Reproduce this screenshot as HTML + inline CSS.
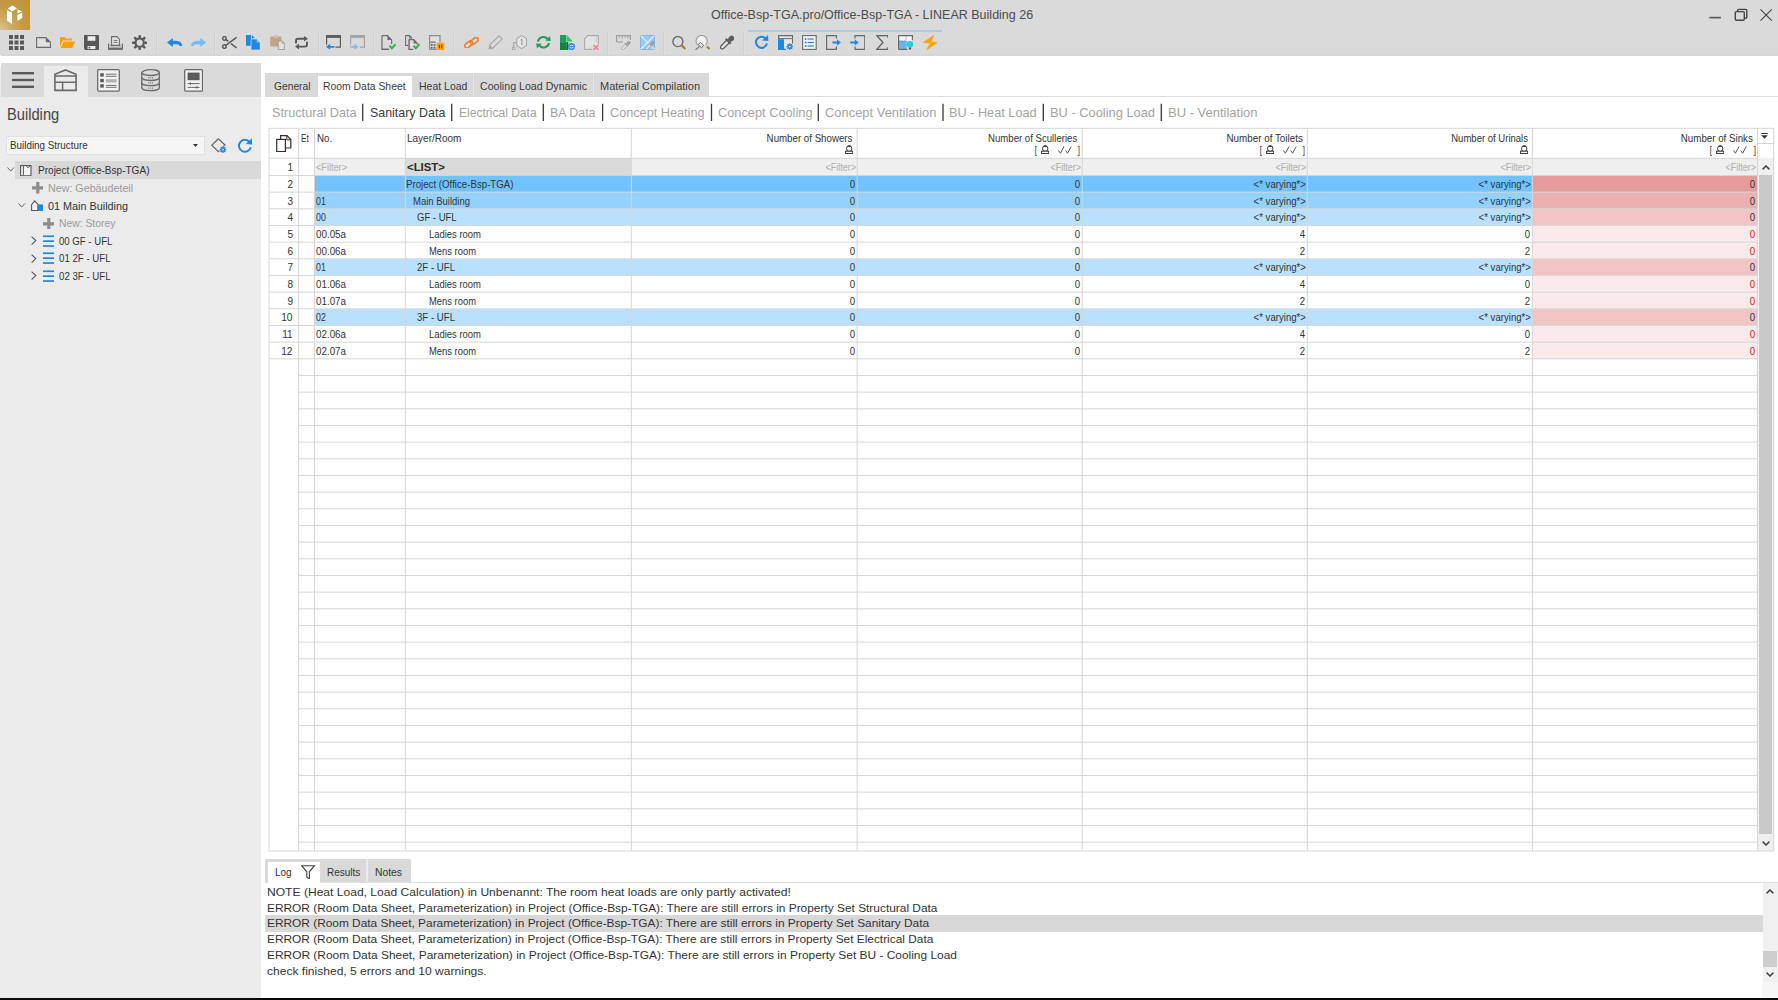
<!DOCTYPE html><html><head><meta charset="utf-8"><title>LINEAR Building</title><style>html,body{margin:0;padding:0}
body{width:1778px;height:1000px;position:relative;overflow:hidden;background:#fff;font-family:"Liberation Sans",sans-serif}
body>div,body>svg,body>span{position:absolute}
.t{white-space:pre;line-height:16px;height:16px}
</style></head><body><div style="left:0.00px;top:0.00px;width:1778.00px;height:55.60px;background:#dadada;"></div><div style="left:0.00px;top:54.00px;width:1778.00px;height:1.60px;background:#d6d6d6;"></div><div style="left:0.00px;top:0.00px;width:30.40px;height:30.20px;background:#dcdce2;"></div><div style="left:0.00px;top:0.00px;width:29.80px;height:29.70px;background:radial-gradient(circle at 0% 100%,#dcc492 0%,#cfae6c 25%,#c49a48 55%,#c09336 100%);"></div><svg style="left:0.00px;top:0.00px" width="30" height="30" viewBox="0 0 30 30" preserveAspectRatio="none"><path d="M12.5,5.4 L16.9,8.4 L12.3,11.3 L7.6,8.5 Z M7.1,10.1 L12,12.4 V23.9 L7.1,20.8 Z M17.4,9.2 L22.2,11.6 L17.4,13.4 Z M22.2,12.7 V17.9 L17.4,20.9 V14.8 Z" fill="#fff"/></svg><span class="t" style="font-size:12.6px;color:#4c4c4c;top:7.20px;left:710.80px;transform:scaleX(0.9935);transform-origin:0 50%;">Office-Bsp-TGA.pro/Office-Bsp-TGA - LINEAR Building 26</span><svg style="left:1705.00px;top:5.00px" width="70" height="20" viewBox="0 0 70 20" preserveAspectRatio="none"><path d="M4.3,12.6 H15.9" stroke="#555" stroke-width="1.6"/><rect x="30.3" y="6.6" width="9" height="8.6" rx="1.2" fill="#dadada" stroke="#444" stroke-width="1.4"/><path d="M32.6,6.4 V5.6 Q32.6,4.4 33.8,4.4 H40.6 Q41.8,4.4 41.8,5.6 V12 Q41.8,13.2 40.6,13.2 H39.6" fill="none" stroke="#444" stroke-width="1.4"/><path d="M55.5,4.4 L66.8,15.6 M66.8,4.4 L55.5,15.6" stroke="#444" stroke-width="1.1"/></svg><svg style="left:9.00px;top:35.20px" width="15" height="15" viewBox="0 0 16 16" preserveAspectRatio="none"><g fill="#585858"><rect x="0" y="0" width="4.2" height="4.2"/><rect x="5.9" y="0" width="4.2" height="4.2"/><rect x="11.8" y="0" width="4.2" height="4.2"/><rect x="0" y="5.9" width="4.2" height="4.2"/><rect x="5.9" y="5.9" width="4.2" height="4.2"/><rect x="11.8" y="5.9" width="4.2" height="4.2"/><rect x="0" y="11.8" width="4.2" height="4.2"/><rect x="5.9" y="11.8" width="4.2" height="4.2"/><rect x="11.8" y="11.8" width="4.2" height="4.2"/></g></svg><svg style="left:36.00px;top:37.00px" width="15" height="11" viewBox="0 0 15 11" preserveAspectRatio="none"><path d="M0.6,0.6 H9.8 L14.4,5.2 V10.4 H0.6 Z" fill="#e0e0e0" stroke="#6a6a6a" stroke-width="1.1"/><path d="M9.8,0.6 V5.2 H14.4 Z" fill="#6a6a6a"/></svg><svg style="left:60.00px;top:37.00px" width="15" height="11" viewBox="0 0 15 11" preserveAspectRatio="none"><path d="M0,0.6 Q0,0 0.6,0 H4.6 L6.2,1.6 H11.6 Q12.2,1.6 12.2,2.2 V3.6 H3.4 Q2.8,3.6 2.5,4.2 L0,9.6 Z" fill="#ffa000"/><path d="M3.6,4.6 H14.6 Q15.2,4.6 14.9,5.2 L12.4,10.6 Q12.2,11 11.7,11 H0.6 Z" fill="#ffa000"/></svg><svg style="left:84.20px;top:35.20px" width="15" height="15" viewBox="0 0 15 15" preserveAspectRatio="none"><path d="M0,0.8 Q0,0 0.8,0 H14.2 Q15,0 15,0.8 V14.2 Q15,15 14.2,15 H1.2 L0,13.8 Z" fill="#585858"/><rect x="3.6" y="1.2" width="7.8" height="4.6" fill="#ececec"/><rect x="3.6" y="11" width="7.8" height="3" fill="#ececec"/><rect x="4.6" y="11.8" width="1.6" height="1.6" fill="#585858"/></svg><svg style="left:108.00px;top:36.00px" width="15" height="14" viewBox="0 0 15 14" preserveAspectRatio="none"><path d="M0.6,7.4 V13.2 H14.4 V7.4" fill="none" stroke="#6a6a6a" stroke-width="1.2"/><rect x="0.6" y="11.6" width="13.8" height="2" fill="#6a6a6a"/><path d="M3.6,9.4 V0.6 H8.8 L11.4,3.2 V9.4 Z" fill="#e6e6e6" stroke="#6a6a6a" stroke-width="1.1"/><path d="M5.8,4.4 H9.4 M5.8,6.4 H9.4" stroke="#6a6a6a" stroke-width="1"/><path d="M2.4,9.6 H12.6" stroke="#6a6a6a" stroke-width="1.2"/></svg><svg style="left:132.10px;top:34.80px" width="15.4" height="15.4" viewBox="0 0 16 16" preserveAspectRatio="none"><g fill="#585858"><path d="M7,0 H9 L9.5,3.2 H6.5 Z" transform="rotate(0 8 8)"/><path d="M7,0 H9 L9.5,3.2 H6.5 Z" transform="rotate(45 8 8)"/><path d="M7,0 H9 L9.5,3.2 H6.5 Z" transform="rotate(90 8 8)"/><path d="M7,0 H9 L9.5,3.2 H6.5 Z" transform="rotate(135 8 8)"/><path d="M7,0 H9 L9.5,3.2 H6.5 Z" transform="rotate(180 8 8)"/><path d="M7,0 H9 L9.5,3.2 H6.5 Z" transform="rotate(225 8 8)"/><path d="M7,0 H9 L9.5,3.2 H6.5 Z" transform="rotate(270 8 8)"/><path d="M7,0 H9 L9.5,3.2 H6.5 Z" transform="rotate(315 8 8)"/></g><circle cx="8" cy="8" r="4.25" fill="none" stroke="#585858" stroke-width="2.1"/></svg><svg style="left:166.70px;top:37.70px" width="15.2" height="9" viewBox="0 0 16 9" preserveAspectRatio="none"><path d="M0,4.4 L6.2,0 V2.7 C12.6,2.5 15.9,4 15.9,7.9 H13.1 C12.9,6.3 10.6,6.1 6.2,6.3 V8.9 Z" fill="#1e88e5"/></svg><svg style="left:190.60px;top:37.70px" width="15.2" height="9" viewBox="0 0 16 9" preserveAspectRatio="none"><g transform="translate(16,0) scale(-1,1)"><path d="M0,4.4 L6.2,0 V2.7 C12.6,2.5 15.9,4 15.9,7.9 H13.1 C12.9,6.3 10.6,6.1 6.2,6.3 V8.9 Z" fill="#7bbaec"/></g></svg><svg style="left:222.00px;top:36.00px" width="15" height="13" viewBox="0 0 15 13" preserveAspectRatio="none"><g fill="none" stroke="#585858" stroke-width="1.4"><circle cx="2.4" cy="2.4" r="1.8"/><circle cx="2.4" cy="10.6" r="1.8"/><path d="M3.8,9.4 L14.6,1.4" stroke-width="1.5"/><path d="M3.8,3.6 L6.4,5.4 M9,7.6 L14.6,11.8" stroke-width="1.5"/></g></svg><svg style="left:246.00px;top:35.00px" width="14.2" height="15" viewBox="0 0 14 15" preserveAspectRatio="none"><path d="M0,0 H5 V10.8 H0 Z" fill="#1e88e5"/><path d="M5.8,0 L8.8,3.2 H5.8 Z" fill="#1e88e5"/><path d="M5,4 H10.4 L14,7.6 V15 H5 Z" fill="#1e88e5" stroke="#dadada" stroke-width="0.7"/><path d="M10.4,4.6 V7.6 H13.4" fill="#8fc4f2"/></svg><svg style="left:270.20px;top:35.00px" width="15" height="15" viewBox="0 0 15 15" preserveAspectRatio="none"><path d="M0.2,1.4 H3.4 V0.8 H5 L5.8,0 L6.6,0.8 H8.2 V1.4 H11.4 V11.6 H0.2 Z" fill="#c2a585"/><rect x="3.4" y="1.2" width="4.8" height="1.6" fill="#d9c4ab"/><path d="M8.2,6 H12.2 L14.6,8.4 V14.6 H8.2 Z" fill="#e2e2e2" stroke="#9a9a9a" stroke-width="0.9"/><path d="M12.2,6 V8.4 H14.6" fill="none" stroke="#9a9a9a" stroke-width="0.8"/></svg><svg style="left:295.40px;top:35.60px" width="13" height="13.2" viewBox="0 0 13 13.2" preserveAspectRatio="none"><g fill="none" stroke="#585858" stroke-width="1.9"><path d="M1,7.4 V4.8 Q1,2.8 3,2.8 H10"/><path d="M12,5.8 V8.6 Q12,10.6 10,10.6 H3"/></g><path d="M9,0 L13,2.8 L9,5.6 Z" fill="#585858"/><path d="M4,7.8 L0,10.6 L4,13.4 Z" fill="#585858"/></svg><svg style="left:326.00px;top:35.20px" width="15" height="14.6" viewBox="0 0 15 15" preserveAspectRatio="none"><rect x="0" y="0" width="15" height="3" fill="#5e5e5e"/><path d="M0.6,2 V10" stroke="#5e5e5e" stroke-width="1.2"/><path d="M14.4,2 V12.4 H9.4" fill="none" stroke="#5e5e5e" stroke-width="1.2"/><path d="M0,12.2 L4.2,9 V11.2 H8.4 V13.2 H4.2 V15.2 Z" fill="#1e88e5"/></svg><svg style="left:350.00px;top:35.20px" width="15" height="14.6" viewBox="0 0 15 15" preserveAspectRatio="none"><rect x="0" y="0" width="15" height="3" fill="#a4a4a4"/><path d="M0.6,2 V10" stroke="#a4a4a4" stroke-width="1.2"/><path d="M14.4,2 V12.4 H9.8" fill="none" stroke="#a4a4a4" stroke-width="1.2"/><path d="M8.6,12.2 L4.4,9 V11.2 H0.2 V13.2 H4.4 V15.2 Z" fill="#7bbaec"/></svg><svg style="left:381.00px;top:35.00px" width="15.2" height="15" viewBox="0 0 16 15" preserveAspectRatio="none"><path d="M1,0.6 H6.8 L11.2,5 V9 M8,14.4 H1 Z" fill="#dfdfdf" stroke="#6a6a6a" stroke-width="1.2"/><path d="M1,0.6 V14.4 H8.6" fill="none" stroke="#6a6a6a" stroke-width="1.2"/><path d="M6.8,0.6 V5 H11.2 Z" fill="#6a6a6a"/><path d="M8.2,11.6 L9.8,10 L11.4,11.8 L14.6,8.4 L16,10 L11.4,14.8 Z" fill="#2db84d"/></svg><svg style="left:405.20px;top:35.00px" width="15.2" height="15" viewBox="0 0 16 15" preserveAspectRatio="none"><path d="M0.6,0.6 H4.8 L7.4,3.2 M0.6,0.6 V10.4 H3.2" fill="none" stroke="#6a6a6a" stroke-width="1.1"/><path d="M4.8,0.8 V3.2 H7.2" fill="none" stroke="#6a6a6a" stroke-width="0.9"/><path d="M4.4,4.6 H9 L12.8,8.4 V9.6 M4.4,4.6 V14.4 H8.6" fill="none" stroke="#6a6a6a" stroke-width="1.2"/><path d="M4.4,4.6 H9 L12.8,8.4 V14.4 H4.4 Z" fill="#dfdfdf"/><path d="M4.4,4.6 H9 L12.8,8.4 V9.6 M4.4,4.6 V14.4 H8.6" fill="none" stroke="#6a6a6a" stroke-width="1.2"/><path d="M9,4.6 V8.4 H12.8 Z" fill="#6a6a6a"/><path d="M8.2,11.6 L9.8,10 L11.4,11.8 L14.6,8.4 L16,10 L11.4,14.8 Z" fill="#2db84d"/></svg><svg style="left:429.30px;top:35.00px" width="15.3" height="15" viewBox="0 0 15.3 15" preserveAspectRatio="none"><path d="M0.6,14.4 V0.6 H11 V7.4" fill="#e0e0e0" stroke="#8a8a8a" stroke-width="1.2"/><path d="M0.6,14.4 H7.6" stroke="#8a8a8a" stroke-width="1.2"/><rect x="1.2" y="6.4" width="5.6" height="1.6" fill="#8a8a8a"/><g fill="#666"><rect x="1.8" y="9" width="1.8" height="1.8"/><rect x="4.6" y="9" width="1.8" height="1.8"/><rect x="1.8" y="11.8" width="1.8" height="1.8"/><rect x="4.6" y="11.8" width="1.8" height="1.8"/></g><rect x="7.8" y="7.8" width="7.5" height="7.2" rx="0.5" fill="#ffa000"/><rect x="9.8" y="9.6" width="1.1" height="3.6" fill="#6b4a10"/><rect x="12.2" y="9.6" width="1.1" height="3.6" fill="#6b4a10"/></svg><svg style="left:464.00px;top:36.60px" width="15" height="11.5" viewBox="0 0 15 11.5" preserveAspectRatio="none"><g fill="none" stroke="#f57c1f" stroke-width="1.55"><rect x="-4.4" y="-2.2" width="8.8" height="4.4" rx="2.2" transform="translate(4.7,7.5) rotate(-38)"/><rect x="-4.4" y="-2.2" width="8.8" height="4.4" rx="2.2" transform="translate(10.3,4) rotate(-38)"/></g></svg><svg style="left:487.80px;top:35.00px" width="15" height="15" viewBox="0 0 15 15" preserveAspectRatio="none"><path d="M11,0.8 L14.2,4 L4.4,13.4 L1.4,10.4 Z" fill="#dcdcdc" stroke="#a8a8a8" stroke-width="1.2"/><path d="M1.4,10.4 L0.4,14.6 L4.4,13.4 Z" fill="#a8a8a8"/></svg><svg style="left:512.00px;top:35.00px" width="15" height="15" viewBox="0 0 15 15" preserveAspectRatio="none"><path d="M9.6,0.6 L14.4,3.6 V10.4 L9.6,13.6 L4.8,10.4 V3.6 Z" fill="#e6e6e6" stroke="#a8a8a8" stroke-width="1.1"/><path d="M8.7,5 L9.9,4.2 V10.2" fill="none" stroke="#8a8a8a" stroke-width="1"/><path d="M1.7,12.4 V7.6 H4.8" fill="none" stroke="#a8a8a8" stroke-width="1.1"/><rect x="0.5" y="12.2" width="2.4" height="2.4" fill="#e6e6e6" stroke="#a8a8a8" stroke-width="1"/></svg><svg style="left:536.00px;top:36.00px" width="15" height="12.5" viewBox="0 0 15 12.5" preserveAspectRatio="none"><g fill="none" stroke="#2c9a58" stroke-width="2.1"><path d="M2,5.6 A5.4,5.2 0 0 1 11.6,3"/><path d="M13,6.9 A5.4,5.2 0 0 1 3.4,9.5"/></g><path d="M9.4,4.8 L14.8,5 L14,0 Z" fill="#2c9a58"/><path d="M5.6,7.7 L0.2,7.5 L1,12.5 Z" fill="#2c9a58"/></svg><svg style="left:560.00px;top:35.00px" width="15" height="15" viewBox="0 0 15 15" preserveAspectRatio="none"><rect x="0" y="0" width="6.3" height="7.2" fill="#1f9e58"/><rect x="0" y="7.2" width="6.3" height="7.8" fill="#138245"/><rect x="6.3" y="7" width="1.9" height="8" fill="#0d6a37"/><path d="M6.9,0 L12.2,5.8 V6.4 H6.9 Z" fill="#35c27c"/><circle cx="11.5" cy="11.6" r="3.5" fill="#2a8be8"/><path d="M9.5,11.2 Q11.5,9.2 13.4,10.9 M13.5,12.1 Q11.5,14.1 9.6,12.4" stroke="#d6ebff" stroke-width="1" fill="none"/></svg><svg style="left:584.00px;top:35.00px" width="15" height="15" viewBox="0 0 15 15" preserveAspectRatio="none"><path d="M0.6,14.4 V3.8 L3.8,0.6 H14.4 V9" fill="#e4e4e4" stroke="#aaa" stroke-width="1.1"/><path d="M0.6,14.4 H8.4" stroke="#aaa" stroke-width="1.1"/><path d="M12.2,1 V8" stroke="#d0d0d0" stroke-width="1.4"/><path d="M9.6,10 L14.4,14.8 M14.4,10 L9.6,14.8" stroke="#ee7f8c" stroke-width="1.5"/></svg><svg style="left:616.00px;top:35.00px" width="15" height="15" viewBox="0 0 15 15" preserveAspectRatio="none"><path d="M0.6,7 V0.6 H14.4 V5" fill="none" stroke="#a2a2a2" stroke-width="1.2"/><path d="M0.6,7 H7" stroke="#a2a2a2" stroke-width="1.2"/><path d="M3.4,0.6 V2.6 M6.2,0.6 V3.4 M9,0.6 V2.6 M11.8,0.6 V3.4" stroke="#a2a2a2" stroke-width="1"/><g transform="translate(5.2,5.6) scale(0.66)"><path d="M6.6,5 L9.4,7.8 L3.5,13.5 Q2.1,14.5 1,13.5 Q0,12.3 1,11 Z" fill="#e4e4e4" stroke="#9c9c9c" stroke-width="1.2"/><path d="M5.1,4.5 L6.5,3.1 L11.4,8 L10,9.4 Z" fill="#9c9c9c"/><path d="M7.6,4.2 L9.2,2.2 Q10.8,-0.4 13.2,1.2 Q15.4,3.2 13.2,5.6 L10.4,7 Z" fill="#9c9c9c"/></g></svg><svg style="left:640.00px;top:35.00px" width="15" height="15" viewBox="0 0 15 15" preserveAspectRatio="none"><rect x="0" y="0" width="15" height="15" fill="#9cc9ee"/><rect x="0.4" y="0.4" width="14.2" height="14.2" fill="none" stroke="#7ab5e6" stroke-width="0.8"/><path d="M0.6,0.6 L14.4,14.4 M14.4,0.6 L0.6,14.4" stroke="#eaf4fc" stroke-width="1.1"/><g transform="translate(5.2,5.6) scale(0.66)"><path d="M6.6,5 L9.4,7.8 L3.5,13.5 Q2.1,14.5 1,13.5 Q0,12.3 1,11 Z" fill="#e4e4e4" stroke="#9c9c9c" stroke-width="1.2"/><path d="M5.1,4.5 L6.5,3.1 L11.4,8 L10,9.4 Z" fill="#9c9c9c"/><path d="M7.6,4.2 L9.2,2.2 Q10.8,-0.4 13.2,1.2 Q15.4,3.2 13.2,5.6 L10.4,7 Z" fill="#9c9c9c"/></g></svg><svg style="left:672.00px;top:36.00px" width="14" height="13.6" viewBox="0 0 14 13.6" preserveAspectRatio="none"><circle cx="5.9" cy="5.6" r="5" fill="#dcdcdc" stroke="#686868" stroke-width="1.35"/><path d="M9.9,9.5 L13.3,13" stroke="#b3781f" stroke-width="2.2"/></svg><svg style="left:695.00px;top:35.00px" width="15.3" height="15" viewBox="0 0 15.3 15" preserveAspectRatio="none"><path d="M3.4,10.6 A5.6,5.6 0 1 1 10.6,10" fill="#f3f3f3" stroke="#9a9a9a" stroke-width="1.1"/><path d="M11.9,11.4 L14.6,14" stroke="#b3781f" stroke-width="2.1"/><path d="M5.4,7.4 L8.6,10.2 L6.6,12.8 L3.2,9.8 Z" fill="#e6e6e6" stroke="#666" stroke-width="1"/><path d="M4.2,11.6 L0.5,14.8" stroke="#666" stroke-width="1.1"/></svg><svg style="left:719.70px;top:35.40px" width="14.5" height="14.5" viewBox="0 0 14.5 14.5" preserveAspectRatio="none"><g transform="translate(0,0) scale(1.0)"><path d="M6.6,5 L9.4,7.8 L3.5,13.5 Q2.1,14.5 1,13.5 Q0,12.3 1,11 Z" fill="#e4e4e4" stroke="#5a5a5a" stroke-width="1.2"/><path d="M5.1,4.5 L6.5,3.1 L11.4,8 L10,9.4 Z" fill="#5a5a5a"/><path d="M7.6,4.2 L9.2,2.2 Q10.8,-0.4 13.2,1.2 Q15.4,3.2 13.2,5.6 L10.4,7 Z" fill="#5a5a5a"/></g></svg><svg style="left:754.40px;top:35.30px" width="14.6" height="14" viewBox="0 0 14.6 14" preserveAspectRatio="none"><path d="M11.8,3.6 A5.6,5.6 0 1 0 13,8.6" fill="none" stroke="#1e88e5" stroke-width="2"/><path d="M8.2,5.6 L14.4,6 L14,0 Z" fill="#1e88e5"/></svg><svg style="left:777.80px;top:35.00px" width="15.3" height="15" viewBox="0 0 15.3 15" preserveAspectRatio="none"><path d="M0.6,14.4 V0.6 H14.6 V8.4" fill="#e6e6e6" stroke="#6a6a6a" stroke-width="1.2"/><path d="M0.6,3.6 H14.6" stroke="#6a6a6a" stroke-width="1"/><rect x="0" y="4.2" width="6" height="10.8" fill="#1e88e5"/><path d="M6,14.4 H8" stroke="#6a6a6a" stroke-width="1.2"/><g transform="translate(11.8,11.6)" fill="#1e88e5"><rect x="-0.7" y="-3.2" width="1.4" height="1.6" transform="rotate(0)"/><rect x="-0.7" y="-3.2" width="1.4" height="1.6" transform="rotate(45)"/><rect x="-0.7" y="-3.2" width="1.4" height="1.6" transform="rotate(90)"/><rect x="-0.7" y="-3.2" width="1.4" height="1.6" transform="rotate(135)"/><rect x="-0.7" y="-3.2" width="1.4" height="1.6" transform="rotate(180)"/><rect x="-0.7" y="-3.2" width="1.4" height="1.6" transform="rotate(225)"/><rect x="-0.7" y="-3.2" width="1.4" height="1.6" transform="rotate(270)"/><rect x="-0.7" y="-3.2" width="1.4" height="1.6" transform="rotate(315)"/><circle r="2.3"/><circle r="0.9" fill="#e6e6e6"/></g></svg><svg style="left:802.00px;top:35.00px" width="14.8" height="15" viewBox="0 0 14.8 15" preserveAspectRatio="none"><rect x="0.6" y="0.6" width="13.6" height="13.8" fill="#f4f4f4" stroke="#6a6a6a" stroke-width="1.1"/><g fill="#1e88e5"><circle cx="3.6" cy="4" r="1"/><circle cx="3.6" cy="7.5" r="1"/><circle cx="3.6" cy="11" r="1"/><rect x="5.6" y="3.4" width="6.2" height="1.2"/><rect x="5.6" y="6.9" width="6.2" height="1.2"/><rect x="5.6" y="10.4" width="6.2" height="1.2"/></g></svg><svg style="left:826.00px;top:35.00px" width="15" height="15" viewBox="0 0 15 15" preserveAspectRatio="none"><path d="M10.4,3.4 V0.6 H0.6 V14.4 H10.4 V11.6" fill="none" stroke="#6a6a6a" stroke-width="1.2"/><path d="M6.4,6.6 H11 V4.4 L15,7.5 L11,10.6 V8.4 H6.4 Z" fill="#1e88e5"/></svg><svg style="left:849.60px;top:35.00px" width="15.4" height="15" viewBox="0 0 15.4 15" preserveAspectRatio="none"><path d="M5,3.4 V0.6 H14.8 V14.4 H5 V11.6" fill="none" stroke="#6a6a6a" stroke-width="1.2"/><path d="M0.2,6.6 H4.8 V4.4 L8.8,7.5 L4.8,10.6 V8.4 H0.2 Z" fill="#1e88e5"/></svg><svg style="left:875.80px;top:35.00px" width="12.4" height="15" viewBox="0 0 12.4 15" preserveAspectRatio="none"><path d="M11.8,2.8 V0.7 H0.9 L7,7.5 L0.9,14.3 H11.8 V12.2" fill="none" stroke="#626262" stroke-width="1.3"/></svg><svg style="left:898.30px;top:35.00px" width="15" height="15" viewBox="0 0 15 15" preserveAspectRatio="none"><rect x="0.6" y="0.6" width="13.8" height="5.6" fill="#f6f6f6"/><rect x="1.2" y="6" width="7.4" height="8.4" fill="#6ab3e9"/><path d="M1,6 H8.6" stroke="#2a8be8" stroke-width="0.9" stroke-dasharray="1.6,0.8"/><path d="M8.1,1.2 V5.6" stroke="#3d9df0" stroke-width="1" stroke-dasharray="1.2,1"/><path d="M0.6,14.4 V0.6 H14.4 V5.2 M0.6,14.4 H9.4" fill="none" stroke="#6a6a6a" stroke-width="1.2"/><circle cx="12" cy="9.3" r="3.3" fill="#19d2e2"/><rect x="10.9" y="12.6" width="2.2" height="1.9" rx="0.5" fill="#555"/></svg><svg style="left:922.50px;top:35.00px" width="14.5" height="15" viewBox="0 0 14.5 15" preserveAspectRatio="none"><path d="M11,0.2 L0.1,7.4 L7,8.3 L3.7,14.9 L14.4,7.6 L8.3,6.8 Z" fill="#ffa400" stroke="#ffa400" stroke-width="0.5" stroke-linejoin="round"/></svg><div style="left:155.80px;top:30.70px;width:1.00px;height:23.00px;background:#d1d1d1;"></div><div style="left:156.80px;top:30.70px;width:1.00px;height:23.00px;background:#dfdfdf;"></div><div style="left:213.90px;top:30.70px;width:1.00px;height:23.00px;background:#d1d1d1;"></div><div style="left:214.90px;top:30.70px;width:1.00px;height:23.00px;background:#dfdfdf;"></div><div style="left:318.00px;top:30.70px;width:1.00px;height:23.00px;background:#d1d1d1;"></div><div style="left:319.00px;top:30.70px;width:1.00px;height:23.00px;background:#dfdfdf;"></div><div style="left:373.00px;top:30.70px;width:1.00px;height:23.00px;background:#d1d1d1;"></div><div style="left:374.00px;top:30.70px;width:1.00px;height:23.00px;background:#dfdfdf;"></div><div style="left:452.90px;top:30.70px;width:1.00px;height:23.00px;background:#d1d1d1;"></div><div style="left:453.90px;top:30.70px;width:1.00px;height:23.00px;background:#dfdfdf;"></div><div style="left:607.20px;top:30.70px;width:1.00px;height:23.00px;background:#d1d1d1;"></div><div style="left:608.20px;top:30.70px;width:1.00px;height:23.00px;background:#dfdfdf;"></div><div style="left:663.00px;top:30.70px;width:1.00px;height:23.00px;background:#d1d1d1;"></div><div style="left:664.00px;top:30.70px;width:1.00px;height:23.00px;background:#dfdfdf;"></div><div style="left:742.60px;top:30.70px;width:1.00px;height:23.00px;background:#d1d1d1;"></div><div style="left:743.60px;top:30.70px;width:1.00px;height:23.00px;background:#dfdfdf;"></div><div style="left:748.00px;top:30.00px;width:194.00px;height:2.00px;background:#a0cee3;"></div><div style="left:0.00px;top:63.00px;width:261.00px;height:934.60px;background:#ebebeb;"></div><div style="left:0.00px;top:55.00px;width:1.20px;height:12.00px;background:#fff;"></div><div style="left:1.00px;top:63.00px;width:260.00px;height:34.00px;background:#dadada;"></div><div style="left:43.50px;top:66.00px;width:44.50px;height:31.20px;background:#ebebeb;"></div><svg style="left:11.80px;top:72.00px" width="22.4" height="16" viewBox="0 0 22.4 16" preserveAspectRatio="none"><g fill="#5a5a5a"><rect y="0" width="22.4" height="2.4"/><rect y="6.8" width="22.4" height="2.4"/><rect y="13.6" width="22.4" height="2.4"/></g></svg><svg style="left:54.30px;top:69.40px" width="23" height="22.4" viewBox="0 0 23 22.4" preserveAspectRatio="none"><path d="M0.9,21.4 V5.3 L11.5,0.9 L22.1,5.3 V21.4 Z" fill="none" stroke="#6a6a6a" stroke-width="1.6"/><path d="M0.9,7 H22.1 M0.9,13.2 H22.1 M8.6,13.2 V21.4" stroke="#6a6a6a" stroke-width="1.5" fill="none"/></svg><svg style="left:97.00px;top:69.00px" width="23" height="22.8" viewBox="0 0 23 22.8" preserveAspectRatio="none"><rect x="0.7" y="0.7" width="21.6" height="21.4" rx="1" fill="#f2f2f2" stroke="#6a6a6a" stroke-width="1.3"/><g fill="#5a5a5a"><rect x="3.2" y="4.2" width="3.6" height="3.4"/><rect x="3.2" y="9.9" width="3.6" height="3.4"/><rect x="3.2" y="15.2" width="3.6" height="3.4"/></g><path d="M8.8,5.2 H19.6 M8.8,7.3 H19.6 M8.8,16.4 H19.6 M8.8,18.3 H19.6" stroke="#5e5e5e" stroke-width="0.9"/><rect x="8.8" y="10.2" width="10.8" height="3.3" fill="#b0b0b0"/></svg><svg style="left:140.90px;top:69.40px" width="19.2" height="22.4" viewBox="0 0 19.2 22.4" preserveAspectRatio="none"><g fill="none" stroke="#6a6a6a" stroke-width="1.3"><ellipse cx="9.6" cy="3.6" rx="8.8" ry="2.9"/><path d="M0.8,3.6 V18.8 A8.8,2.9 0 0 0 18.4,18.8 V3.6"/><path d="M0.8,8.6 A8.8,2.9 0 0 0 18.4,8.6 M0.8,13.7 A8.8,2.9 0 0 0 18.4,13.7"/></g><g fill="#8a8a8a"><rect x="7.4" y="8" width="0.9" height="1.6"/><rect x="9.2" y="8" width="0.9" height="1.6"/><rect x="11" y="8" width="0.9" height="1.6"/><rect x="7.4" y="13.2" width="0.9" height="1.6"/><rect x="9.2" y="13.2" width="0.9" height="1.6"/><rect x="11" y="13.2" width="0.9" height="1.6"/><rect x="7.4" y="18.4" width="0.9" height="1.6"/><rect x="9.2" y="18.4" width="0.9" height="1.6"/><rect x="11" y="18.4" width="0.9" height="1.6"/></g></svg><svg style="left:183.90px;top:69.00px" width="19.2" height="22.8" viewBox="0 0 19.2 22.8" preserveAspectRatio="none"><rect x="0.7" y="0.7" width="17.8" height="21.4" rx="1" fill="#f2f2f2" stroke="#6a6a6a" stroke-width="1.3"/><rect x="3.6" y="3.6" width="12" height="7.6" fill="#5a5a5a"/><path d="M3.6,14.6 H15.6 M3.6,18.4 H15.6" stroke="#5a5a5a" stroke-width="0.9"/><path d="M6.4,13.4 V15.8 M12.8,17.2 V19.6" stroke="#5a5a5a" stroke-width="1.1"/></svg><span class="t" style="font-size:15.6px;color:#444;top:106.80px;left:6.90px;transform:scaleX(0.9408);transform-origin:0 50%;">Building</span><div style="left:6.20px;top:136.30px;width:199.20px;height:19.00px;background:#f5f5f5;box-sizing:border-box;border:1px solid #e0e0e0"></div><span class="t" style="font-size:11.2px;color:#333;top:137.00px;left:9.70px;transform:scaleX(0.8798);transform-origin:0 50%;">Building Structure</span><svg style="left:193.20px;top:143.80px" width="5" height="3" viewBox="0 0 5 3" preserveAspectRatio="none"><path d="M0,0 H5 L2.5,3 Z" fill="#333"/></svg><svg style="left:211.00px;top:138.00px" width="16" height="15.4" viewBox="0 0 16 15.4" preserveAspectRatio="none"><path d="M7.4,0.8 L14,7 L12.4,8.4 M7.4,0.8 L0.8,7.2 L7.4,13.6 L8.6,12.6" fill="none" stroke="#666" stroke-width="1.2"/><g transform="translate(12,11.6)" fill="#1e88e5"><rect x="-0.7" y="-3.3" width="1.4" height="1.7" transform="rotate(0)"/><rect x="-0.7" y="-3.3" width="1.4" height="1.7" transform="rotate(45)"/><rect x="-0.7" y="-3.3" width="1.4" height="1.7" transform="rotate(90)"/><rect x="-0.7" y="-3.3" width="1.4" height="1.7" transform="rotate(135)"/><rect x="-0.7" y="-3.3" width="1.4" height="1.7" transform="rotate(180)"/><rect x="-0.7" y="-3.3" width="1.4" height="1.7" transform="rotate(225)"/><rect x="-0.7" y="-3.3" width="1.4" height="1.7" transform="rotate(270)"/><rect x="-0.7" y="-3.3" width="1.4" height="1.7" transform="rotate(315)"/><circle r="2.4"/><circle r="0.9" fill="#ebebeb"/></g></svg><svg style="left:237.00px;top:138.00px" width="15.4" height="15.2" viewBox="0 0 15.4 15.2" preserveAspectRatio="none"><path d="M12.6,4 A6,6 0 1 0 13.8,9.2" fill="none" stroke="#1e88e5" stroke-width="2"/><path d="M8.8,6 L15.2,6.4 L14.8,0.2 Z" fill="#1e88e5"/></svg><div style="left:15.00px;top:161.20px;width:246.00px;height:17.70px;background:#d9d9d9;"></div><svg style="left:7.30px;top:167.40px" width="7.4" height="4.6" viewBox="0 0 9.2 5.4" preserveAspectRatio="none"><path d="M0.6,0.6 L4.6,4.8 L8.6,0.6" fill="none" stroke="#555" stroke-width="1.1"/></svg><svg style="left:20.20px;top:164.60px" width="11.6" height="11.4" viewBox="0 0 11.6 11.4" preserveAspectRatio="none"><rect x="0.6" y="0.6" width="10.4" height="10.2" fill="#f4f4f4" stroke="#555" stroke-width="1.1"/><path d="M3.4,0.6 V10.8" stroke="#555" stroke-width="1"/><path d="M6.4,0.8 L8.2,3 L10,0.8" fill="none" stroke="#555" stroke-width="0.9"/></svg><span class="t" style="font-size:10.9px;color:#333;top:162.40px;left:37.50px;transform:scaleX(0.9227);transform-origin:0 50%;">Project (Office-Bsp-TGA)</span><svg style="left:31.50px;top:182.40px" width="11.6" height="11.6" viewBox="0 0 11.6 11.6" preserveAspectRatio="none"><path d="M4.2,0 H7.4 V4.2 H11.6 V7.4 H7.4 V11.6 H4.2 V7.4 H0 V4.2 H4.2 Z" fill="#8c8c8c"/></svg><span class="t" style="font-size:10.9px;color:#9a9a9a;top:180.10px;left:48.30px;transform:scaleX(0.9829);transform-origin:0 50%;">New: Gebäudeteil</span><svg style="left:18.30px;top:202.50px" width="7.4" height="4.6" viewBox="0 0 9.2 5.4" preserveAspectRatio="none"><path d="M0.6,0.6 L4.6,4.8 L8.6,0.6" fill="none" stroke="#555" stroke-width="1.1"/></svg><svg style="left:30.90px;top:199.60px" width="12.2" height="11.6" viewBox="0 0 12.2 12" preserveAspectRatio="none"><path d="M0.6,11 V4.8 L3.8,0.9 L7,4.8 V11 Z" fill="#f4f4f4" stroke="#555" stroke-width="1.1"/><rect x="6.5" y="4.6" width="5.5" height="6.8" fill="#1e88e5"/></svg><span class="t" style="font-size:10.9px;color:#333;top:197.60px;left:48.30px;transform:scaleX(0.9934);transform-origin:0 50%;">01 Main Building</span><svg style="left:42.50px;top:217.60px" width="11.6" height="11.6" viewBox="0 0 11.6 11.6" preserveAspectRatio="none"><path d="M4.2,0 H7.4 V4.2 H11.6 V7.4 H7.4 V11.6 H4.2 V7.4 H0 V4.2 H4.2 Z" fill="#8c8c8c"/></svg><span class="t" style="font-size:10.9px;color:#9a9a9a;top:215.30px;left:59.30px;transform:scaleX(0.9506);transform-origin:0 50%;">New: Storey</span><svg style="left:31.20px;top:236.40px" width="5.4" height="9.2" viewBox="0 0 5.4 9.2" preserveAspectRatio="none"><path d="M0.6,0.6 L4.8,4.6 L0.6,8.6" fill="none" stroke="#555" stroke-width="1.1"/></svg><svg style="left:42.60px;top:234.80px" width="11.6" height="12.4" viewBox="0 0 11.6 12.4" preserveAspectRatio="none"><g fill="#1e88e5"><rect y="0.4" width="11.6" height="1.7"/><rect y="5.3" width="11.6" height="1.7"/><rect y="10.2" width="11.6" height="1.7"/></g></svg><span class="t" style="font-size:10.9px;color:#333;top:233.00px;left:59.30px;transform:scaleX(0.8824);transform-origin:0 50%;">00 GF - UFL</span><svg style="left:31.20px;top:253.80px" width="5.4" height="9.2" viewBox="0 0 5.4 9.2" preserveAspectRatio="none"><path d="M0.6,0.6 L4.8,4.6 L0.6,8.6" fill="none" stroke="#555" stroke-width="1.1"/></svg><svg style="left:42.60px;top:252.20px" width="11.6" height="12.4" viewBox="0 0 11.6 12.4" preserveAspectRatio="none"><g fill="#1e88e5"><rect y="0.4" width="11.6" height="1.7"/><rect y="5.3" width="11.6" height="1.7"/><rect y="10.2" width="11.6" height="1.7"/></g></svg><span class="t" style="font-size:10.9px;color:#333;top:250.40px;left:59.30px;transform:scaleX(0.8880);transform-origin:0 50%;">01 2F - UFL</span><svg style="left:31.20px;top:271.20px" width="5.4" height="9.2" viewBox="0 0 5.4 9.2" preserveAspectRatio="none"><path d="M0.6,0.6 L4.8,4.6 L0.6,8.6" fill="none" stroke="#555" stroke-width="1.1"/></svg><svg style="left:42.60px;top:269.60px" width="11.6" height="12.4" viewBox="0 0 11.6 12.4" preserveAspectRatio="none"><g fill="#1e88e5"><rect y="0.4" width="11.6" height="1.7"/><rect y="5.3" width="11.6" height="1.7"/><rect y="10.2" width="11.6" height="1.7"/></g></svg><span class="t" style="font-size:10.9px;color:#333;top:267.80px;left:59.30px;transform:scaleX(0.8880);transform-origin:0 50%;">02 3F - UFL</span><div style="left:0.00px;top:997.60px;width:1778.00px;height:2.40px;background:#0a0a0a;"></div><div style="left:264.70px;top:96.40px;width:1514.00px;height:1.00px;background:#dedede;"></div><div style="left:264.70px;top:73.20px;width:444.20px;height:23.70px;background:#d9d9d9;"></div><div style="left:317.70px;top:76.10px;width:94.40px;height:21.40px;background:#fff;"></div><div style="left:472.80px;top:73.20px;width:1.00px;height:23.70px;background:#e6e6e6;"></div><div style="left:592.60px;top:73.20px;width:1.00px;height:23.70px;background:#e6e6e6;"></div><span class="t" style="font-size:10.9px;color:#3a3a3a;top:77.90px;left:273.50px;transform:scaleX(0.9419);transform-origin:0 50%;">General</span><span class="t" style="font-size:10.9px;color:#3a3a3a;top:77.90px;left:323.40px;transform:scaleX(0.9541);transform-origin:0 50%;">Room Data Sheet</span><span class="t" style="font-size:10.9px;color:#3a3a3a;top:77.90px;left:418.60px;transform:scaleX(0.9629);transform-origin:0 50%;">Heat Load</span><span class="t" style="font-size:10.9px;color:#3a3a3a;top:77.90px;left:479.80px;transform:scaleX(0.9765);transform-origin:0 50%;">Cooling Load Dynamic</span><span class="t" style="font-size:10.9px;color:#3a3a3a;top:77.90px;left:600.20px;transform:scaleX(1.0074);transform-origin:0 50%;">Material Compilation</span><span class="t" style="font-size:12.9px;color:#a3a3a3;top:104.80px;left:271.60px;transform:scaleX(0.9839);transform-origin:0 50%;">Structural Data</span><span class="t" style="font-size:12.9px;color:#3a3a3a;top:104.80px;left:370.00px;transform:scaleX(0.9640);transform-origin:0 50%;">Sanitary Data</span><span class="t" style="font-size:12.9px;color:#a3a3a3;top:104.80px;left:458.70px;transform:scaleX(0.9337);transform-origin:0 50%;">Electrical Data</span><span class="t" style="font-size:12.9px;color:#a3a3a3;top:104.80px;left:550.30px;transform:scaleX(0.9620);transform-origin:0 50%;">BA Data</span><span class="t" style="font-size:12.9px;color:#a3a3a3;top:104.80px;left:609.50px;transform:scaleX(0.9841);transform-origin:0 50%;">Concept Heating</span><span class="t" style="font-size:12.9px;color:#a3a3a3;top:104.80px;left:717.50px;transform:scaleX(0.9915);transform-origin:0 50%;">Concept Cooling</span><span class="t" style="font-size:12.9px;color:#a3a3a3;top:104.80px;left:825.00px;transform:scaleX(1.0028);transform-origin:0 50%;">Concept Ventilation</span><span class="t" style="font-size:12.9px;color:#a3a3a3;top:104.80px;left:949.40px;transform:scaleX(0.9858);transform-origin:0 50%;">BU - Heat Load</span><span class="t" style="font-size:12.9px;color:#a3a3a3;top:104.80px;left:1050.00px;transform:scaleX(0.9967);transform-origin:0 50%;">BU - Cooling Load</span><span class="t" style="font-size:12.9px;color:#a3a3a3;top:104.80px;left:1168.00px;transform:scaleX(1.0072);transform-origin:0 50%;">BU - Ventilation</span><svg style="left:0.00px;top:100.00px" width="1778" height="24" viewBox="0 100 1778 24" preserveAspectRatio="none"><path d="M362.7,103.7 V121 M451.7,103.7 V121 M543.3,103.7 V121 M602.6,103.7 V121 M711.5,103.7 V121 M818.3,103.7 V121 M943,103.7 V121 M1043.3,103.7 V121 M1161.3,103.7 V121" stroke="#383838" stroke-width="1.3" fill="none"/></svg><div style="left:269.00px;top:128.30px;width:1504.60px;height:722.70px;background:#fff;"></div><div style="left:314.50px;top:158.30px;width:90.80px;height:17.17px;background:#efefef;"></div><div style="left:405.30px;top:158.30px;width:226.00px;height:17.17px;background:#dadada;"></div><div style="left:631.30px;top:158.30px;width:1126.20px;height:17.17px;background:#efefef;"></div><div style="left:1757.50px;top:158.30px;width:16.10px;height:16.67px;background:#f0f0f0;"></div><div style="left:314.50px;top:175.47px;width:1217.90px;height:16.67px;background:#70c3fe;"></div><div style="left:1532.40px;top:175.47px;width:225.10px;height:16.67px;background:#e69b9b;"></div><div style="left:314.50px;top:192.13px;width:1217.90px;height:16.67px;background:#93d2fe;"></div><div style="left:1532.40px;top:192.13px;width:225.10px;height:16.67px;background:#ecb0b0;"></div><div style="left:314.50px;top:208.80px;width:1217.90px;height:16.67px;background:#b9e1fe;"></div><div style="left:1532.40px;top:208.80px;width:225.10px;height:16.67px;background:#f1c5c5;"></div><div style="left:1532.40px;top:225.47px;width:225.10px;height:16.67px;background:#faeaea;"></div><div style="left:1532.40px;top:242.14px;width:225.10px;height:16.67px;background:#faeaea;"></div><div style="left:314.50px;top:258.80px;width:1217.90px;height:16.67px;background:#b9e1fe;"></div><div style="left:1532.40px;top:258.80px;width:225.10px;height:16.67px;background:#f1c5c5;"></div><div style="left:1532.40px;top:275.47px;width:225.10px;height:16.67px;background:#faeaea;"></div><div style="left:1532.40px;top:292.14px;width:225.10px;height:16.67px;background:#faeaea;"></div><div style="left:314.50px;top:308.80px;width:1217.90px;height:16.67px;background:#b9e1fe;"></div><div style="left:1532.40px;top:308.80px;width:225.10px;height:16.67px;background:#f1c5c5;"></div><div style="left:1532.40px;top:325.47px;width:225.10px;height:16.67px;background:#faeaea;"></div><div style="left:1532.40px;top:342.14px;width:225.10px;height:16.67px;background:#faeaea;"></div><div style="left:1757.50px;top:175.07px;width:16.10px;height:675.93px;background:#f0f0f0;"></div><div style="left:1759.00px;top:174.60px;width:13.20px;height:659.60px;background:#c9c9c9;"></div><svg style="left:1761.60px;top:164.60px" width="8" height="5" viewBox="0 0 8 5" preserveAspectRatio="none"><path d="M0.6,4.4 L4,1 L7.4,4.4" fill="none" stroke="#444" stroke-width="1.5"/></svg><svg style="left:1761.60px;top:841.00px" width="8" height="5" viewBox="0 0 8 5" preserveAspectRatio="none"><path d="M0.6,0.6 L4,4 L7.4,0.6" fill="none" stroke="#444" stroke-width="1.5"/></svg><div style="left:1757.50px;top:128.30px;width:16.10px;height:30.00px;background:#fff;"></div><svg style="left:1761.40px;top:132.80px" width="7" height="6" viewBox="0 0 7 6" preserveAspectRatio="none"><path d="M0.2,0.5 H6.8" stroke="#333" stroke-width="1"/><path d="M0.2,2.2 H6.8 L3.5,5.8 Z" fill="#333"/></svg><div style="left:1757.50px;top:143.00px;width:16.10px;height:0.90px;background:#d6d6d6;"></div><svg style="left:0.00px;top:0.00px" width="1778" height="1000" viewBox="0 0 1778 1000" preserveAspectRatio="none"><path d="M269.00,158.30 H1757.50 M269.00,175.47 H1757.50 M269.00,192.13 H1757.50 M269.00,208.80 H1757.50 M269.00,225.47 H1757.50 M269.00,242.14 H1757.50 M269.00,258.80 H1757.50 M269.00,275.47 H1757.50 M269.00,292.14 H1757.50 M269.00,308.80 H1757.50 M269.00,325.47 H1757.50 M269.00,342.14 H1757.50 M269.00,358.80 H1757.50 M298.60,375.47 H1757.50 M298.60,392.14 H1757.50 M298.60,408.81 H1757.50 M298.60,425.47 H1757.50 M298.60,442.14 H1757.50 M298.60,458.81 H1757.50 M298.60,475.47 H1757.50 M298.60,492.14 H1757.50 M298.60,508.81 H1757.50 M298.60,525.47 H1757.50 M298.60,542.14 H1757.50 M298.60,558.81 H1757.50 M298.60,575.48 H1757.50 M298.60,592.14 H1757.50 M298.60,608.81 H1757.50 M298.60,625.48 H1757.50 M298.60,642.14 H1757.50 M298.60,658.81 H1757.50 M298.60,675.48 H1757.50 M298.60,692.14 H1757.50 M298.60,708.81 H1757.50 M298.60,725.48 H1757.50 M298.60,742.14 H1757.50 M298.60,758.81 H1757.50 M298.60,775.48 H1757.50 M298.60,792.15 H1757.50 M298.60,808.81 H1757.50 M298.60,825.48 H1757.50 M298.60,842.15 H1757.50 M298.60,128.30 V851.00 M314.50,128.30 V851.00 M405.30,128.30 V851.00 M631.30,128.30 V851.00 M857.20,128.30 V851.00 M1082.20,128.30 V851.00 M1307.30,128.30 V851.00 M1532.40,128.30 V851.00 M1757.50,128.30 V851.00 M269.00,128.30 H1773.60 V851.00 H269.00 Z" fill="none" stroke="#d6d6d6" stroke-width="1"/></svg><svg style="left:276.40px;top:134.80px" width="15.6" height="17.4" viewBox="0 0 15.6 17.4" preserveAspectRatio="none"><path d="M4.6,4.4 V0.7 H11 L14.8,4.6 V13 H9.4" fill="none" stroke="#3a2a2a" stroke-width="1.2"/><path d="M10.8,0.9 V4.8 H14.6" fill="none" stroke="#3a2a2a" stroke-width="1"/><rect x="0.7" y="4.4" width="8.7" height="12.2" fill="#fff" stroke="#3a2a2a" stroke-width="1.2"/></svg><span class="t" style="font-size:10.8px;color:#333;top:129.60px;left:301.40px;transform:scaleX(0.7645);transform-origin:0 50%;">Et</span><span class="t" style="font-size:10.8px;color:#333;top:129.60px;left:316.80px;transform:scaleX(0.9041);transform-origin:0 50%;">No.</span><span class="t" style="font-size:10.8px;color:#333;top:129.60px;left:407.40px;transform:scaleX(0.9250);transform-origin:0 50%;">Layer/Room</span><span class="t" style="font-size:10.8px;color:#333;top:129.60px;right:925.40px;transform:scaleX(0.8992);transform-origin:100% 50%;">Number of Showers</span><svg style="left:844.80px;top:145.20px" width="8.4" height="9.2" viewBox="0 0 8.4 9.2" preserveAspectRatio="none"><path d="M4.2,0.7 A2.7,2.9 0 0 1 4.2,6.5 A2.7,2.9 0 0 1 4.2,0.7 Z" fill="none" stroke="#333" stroke-width="1"/><path d="M2,1.6 Q4.2,-0.6 6.4,1.6 Q4.2,2.4 2,1.6 Z" fill="#333"/><rect x="0.6" y="6.2" width="7.2" height="2.4" fill="#fff" stroke="#333" stroke-width="1"/></svg><span class="t" style="font-size:10.8px;color:#333;top:129.60px;right:700.40px;transform:scaleX(0.8901);transform-origin:100% 50%;">Number of Sculleries</span><span class="t" style="font-size:10.8px;color:#333;top:142.10px;right:697.60px;transform:scaleX(0.7333);transform-origin:100% 50%;">]</span><svg style="left:1058.00px;top:146.00px" width="13.6" height="7.6" viewBox="0 0 13.6 7.6" preserveAspectRatio="none"><path d="M0.4,4.4 L2.4,7.2 L6,0.6 M7.6,4.4 L9.6,7.2 L13.2,0.6" fill="none" stroke="#444" stroke-width="0.9"/></svg><svg style="left:1040.80px;top:145.20px" width="8.4" height="9.2" viewBox="0 0 8.4 9.2" preserveAspectRatio="none"><path d="M4.2,0.7 A2.7,2.9 0 0 1 4.2,6.5 A2.7,2.9 0 0 1 4.2,0.7 Z" fill="none" stroke="#333" stroke-width="1"/><path d="M2,1.6 Q4.2,-0.6 6.4,1.6 Q4.2,2.4 2,1.6 Z" fill="#333"/><rect x="0.6" y="6.2" width="7.2" height="2.4" fill="#fff" stroke="#333" stroke-width="1"/></svg><span class="t" style="font-size:10.8px;color:#333;top:142.10px;right:741.20px;transform:scaleX(0.7333);transform-origin:100% 50%;">[</span><span class="t" style="font-size:10.8px;color:#333;top:129.60px;right:475.40px;transform:scaleX(0.9114);transform-origin:100% 50%;">Number of Toilets</span><span class="t" style="font-size:10.8px;color:#333;top:142.10px;right:472.60px;transform:scaleX(0.7333);transform-origin:100% 50%;">]</span><svg style="left:1283.00px;top:146.00px" width="13.6" height="7.6" viewBox="0 0 13.6 7.6" preserveAspectRatio="none"><path d="M0.4,4.4 L2.4,7.2 L6,0.6 M7.6,4.4 L9.6,7.2 L13.2,0.6" fill="none" stroke="#444" stroke-width="0.9"/></svg><svg style="left:1265.80px;top:145.20px" width="8.4" height="9.2" viewBox="0 0 8.4 9.2" preserveAspectRatio="none"><path d="M4.2,0.7 A2.7,2.9 0 0 1 4.2,6.5 A2.7,2.9 0 0 1 4.2,0.7 Z" fill="none" stroke="#333" stroke-width="1"/><path d="M2,1.6 Q4.2,-0.6 6.4,1.6 Q4.2,2.4 2,1.6 Z" fill="#333"/><rect x="0.6" y="6.2" width="7.2" height="2.4" fill="#fff" stroke="#333" stroke-width="1"/></svg><span class="t" style="font-size:10.8px;color:#333;top:142.10px;right:516.20px;transform:scaleX(0.7333);transform-origin:100% 50%;">[</span><span class="t" style="font-size:10.8px;color:#333;top:129.60px;right:250.20px;transform:scaleX(0.8826);transform-origin:100% 50%;">Number of Urinals</span><svg style="left:1520.00px;top:145.20px" width="8.4" height="9.2" viewBox="0 0 8.4 9.2" preserveAspectRatio="none"><path d="M4.2,0.7 A2.7,2.9 0 0 1 4.2,6.5 A2.7,2.9 0 0 1 4.2,0.7 Z" fill="none" stroke="#333" stroke-width="1"/><path d="M2,1.6 Q4.2,-0.6 6.4,1.6 Q4.2,2.4 2,1.6 Z" fill="#333"/><rect x="0.6" y="6.2" width="7.2" height="2.4" fill="#fff" stroke="#333" stroke-width="1"/></svg><span class="t" style="font-size:10.8px;color:#333;top:129.60px;right:25.20px;transform:scaleX(0.9021);transform-origin:100% 50%;">Number of Sinks</span><span class="t" style="font-size:10.8px;color:#333;top:142.10px;right:22.40px;transform:scaleX(0.7333);transform-origin:100% 50%;">]</span><svg style="left:1733.20px;top:146.00px" width="13.6" height="7.6" viewBox="0 0 13.6 7.6" preserveAspectRatio="none"><path d="M0.4,4.4 L2.4,7.2 L6,0.6 M7.6,4.4 L9.6,7.2 L13.2,0.6" fill="none" stroke="#444" stroke-width="0.9"/></svg><svg style="left:1716.00px;top:145.20px" width="8.4" height="9.2" viewBox="0 0 8.4 9.2" preserveAspectRatio="none"><path d="M4.2,0.7 A2.7,2.9 0 0 1 4.2,6.5 A2.7,2.9 0 0 1 4.2,0.7 Z" fill="none" stroke="#333" stroke-width="1"/><path d="M2,1.6 Q4.2,-0.6 6.4,1.6 Q4.2,2.4 2,1.6 Z" fill="#333"/><rect x="0.6" y="6.2" width="7.2" height="2.4" fill="#fff" stroke="#333" stroke-width="1"/></svg><span class="t" style="font-size:10.8px;color:#333;top:142.10px;right:66.00px;transform:scaleX(0.7333);transform-origin:100% 50%;">[</span><span class="t" style="font-size:10.6px;color:#adadad;top:159.23px;left:316.00px;transform:scaleX(0.8630);transform-origin:0 50%;">&lt;Filter&gt;</span><span class="t" style="font-size:10.8px;color:#2a2a2a;top:159.03px;font-weight:700;left:406.70px;transform:scaleX(1.0551);transform-origin:0 50%;">&lt;LIST&gt;</span><span class="t" style="font-size:10.6px;color:#adadad;top:159.23px;right:922.40px;transform:scaleX(0.8463);transform-origin:100% 50%;">&lt;Filter&gt;</span><span class="t" style="font-size:10.6px;color:#adadad;top:159.23px;right:697.40px;transform:scaleX(0.8463);transform-origin:100% 50%;">&lt;Filter&gt;</span><span class="t" style="font-size:10.6px;color:#adadad;top:159.23px;right:472.40px;transform:scaleX(0.8463);transform-origin:100% 50%;">&lt;Filter&gt;</span><span class="t" style="font-size:10.6px;color:#adadad;top:159.23px;right:247.20px;transform:scaleX(0.8463);transform-origin:100% 50%;">&lt;Filter&gt;</span><span class="t" style="font-size:10.6px;color:#adadad;top:159.23px;right:22.40px;transform:scaleX(0.8463);transform-origin:100% 50%;">&lt;Filter&gt;</span><span class="t" style="font-size:11.2px;color:#333;top:159.03px;right:1485.10px;transform:scaleX(0.9000);transform-origin:100% 50%;">1</span><span class="t" style="font-size:11.2px;color:#333;top:176.10px;right:1485.10px;transform:scaleX(0.9000);transform-origin:100% 50%;">2</span><span class="t" style="font-size:11.2px;color:#333;top:192.77px;right:1485.10px;transform:scaleX(0.9000);transform-origin:100% 50%;">3</span><span class="t" style="font-size:11.2px;color:#333;top:209.43px;right:1485.10px;transform:scaleX(0.9000);transform-origin:100% 50%;">4</span><span class="t" style="font-size:11.2px;color:#333;top:226.10px;right:1485.10px;transform:scaleX(0.9000);transform-origin:100% 50%;">5</span><span class="t" style="font-size:11.2px;color:#333;top:242.77px;right:1485.10px;transform:scaleX(0.9000);transform-origin:100% 50%;">6</span><span class="t" style="font-size:11.2px;color:#333;top:259.44px;right:1485.10px;transform:scaleX(0.9000);transform-origin:100% 50%;">7</span><span class="t" style="font-size:11.2px;color:#333;top:276.10px;right:1485.10px;transform:scaleX(0.9000);transform-origin:100% 50%;">8</span><span class="t" style="font-size:11.2px;color:#333;top:292.77px;right:1485.10px;transform:scaleX(0.9000);transform-origin:100% 50%;">9</span><span class="t" style="font-size:11.2px;color:#333;top:309.44px;right:1485.10px;transform:scaleX(0.9000);transform-origin:100% 50%;">10</span><span class="t" style="font-size:11.2px;color:#333;top:326.10px;right:1485.10px;transform:scaleX(0.9000);transform-origin:100% 50%;">11</span><span class="t" style="font-size:11.2px;color:#333;top:342.77px;right:1485.10px;transform:scaleX(0.9000);transform-origin:100% 50%;">12</span><span class="t" style="font-size:11.2px;color:#333;top:176.10px;left:406.40px;transform:scaleX(0.8661);transform-origin:0 50%;">Project (Office-Bsp-TGA)</span><span class="t" style="font-size:11.2px;color:#333;top:176.10px;right:922.50px;transform:scaleX(0.8600);transform-origin:100% 50%;">0</span><span class="t" style="font-size:11.2px;color:#333;top:176.10px;right:697.50px;transform:scaleX(0.8600);transform-origin:100% 50%;">0</span><span class="t" style="font-size:11.2px;color:#333;top:176.10px;right:472.50px;transform:scaleX(0.8597);transform-origin:100% 50%;">&lt;* varying*&gt;</span><span class="t" style="font-size:11.2px;color:#333;top:176.10px;right:247.50px;transform:scaleX(0.8597);transform-origin:100% 50%;">&lt;* varying*&gt;</span><span class="t" style="font-size:11.2px;color:#333;top:176.10px;right:22.40px;transform:scaleX(0.8600);transform-origin:100% 50%;">0</span><span class="t" style="font-size:11.2px;color:#333;top:192.77px;left:315.60px;transform:scaleX(0.7870);transform-origin:0 50%;">01</span><span class="t" style="font-size:11.2px;color:#333;top:192.77px;left:412.60px;transform:scaleX(0.8486);transform-origin:0 50%;">Main Building</span><span class="t" style="font-size:11.2px;color:#333;top:192.77px;right:922.50px;transform:scaleX(0.8600);transform-origin:100% 50%;">0</span><span class="t" style="font-size:11.2px;color:#333;top:192.77px;right:697.50px;transform:scaleX(0.8600);transform-origin:100% 50%;">0</span><span class="t" style="font-size:11.2px;color:#333;top:192.77px;right:472.50px;transform:scaleX(0.8597);transform-origin:100% 50%;">&lt;* varying*&gt;</span><span class="t" style="font-size:11.2px;color:#333;top:192.77px;right:247.50px;transform:scaleX(0.8597);transform-origin:100% 50%;">&lt;* varying*&gt;</span><span class="t" style="font-size:11.2px;color:#333;top:192.77px;right:22.40px;transform:scaleX(0.8600);transform-origin:100% 50%;">0</span><span class="t" style="font-size:11.2px;color:#333;top:209.43px;left:315.60px;transform:scaleX(0.7870);transform-origin:0 50%;">00</span><span class="t" style="font-size:11.2px;color:#333;top:209.43px;left:417.20px;transform:scaleX(0.8493);transform-origin:0 50%;">GF - UFL</span><span class="t" style="font-size:11.2px;color:#333;top:209.43px;right:922.50px;transform:scaleX(0.8600);transform-origin:100% 50%;">0</span><span class="t" style="font-size:11.2px;color:#333;top:209.43px;right:697.50px;transform:scaleX(0.8600);transform-origin:100% 50%;">0</span><span class="t" style="font-size:11.2px;color:#333;top:209.43px;right:472.50px;transform:scaleX(0.8597);transform-origin:100% 50%;">&lt;* varying*&gt;</span><span class="t" style="font-size:11.2px;color:#333;top:209.43px;right:247.50px;transform:scaleX(0.8597);transform-origin:100% 50%;">&lt;* varying*&gt;</span><span class="t" style="font-size:11.2px;color:#333;top:209.43px;right:22.40px;transform:scaleX(0.8600);transform-origin:100% 50%;">0</span><span class="t" style="font-size:11.2px;color:#333;top:226.10px;left:315.60px;transform:scaleX(0.8767);transform-origin:0 50%;">00.05a</span><span class="t" style="font-size:11.2px;color:#333;top:226.10px;left:429.00px;transform:scaleX(0.8445);transform-origin:0 50%;">Ladies room</span><span class="t" style="font-size:11.2px;color:#333;top:226.10px;right:922.50px;transform:scaleX(0.8600);transform-origin:100% 50%;">0</span><span class="t" style="font-size:11.2px;color:#333;top:226.10px;right:697.50px;transform:scaleX(0.8600);transform-origin:100% 50%;">0</span><span class="t" style="font-size:11.2px;color:#333;top:226.10px;right:472.50px;transform:scaleX(0.8600);transform-origin:100% 50%;">4</span><span class="t" style="font-size:11.2px;color:#333;top:226.10px;right:247.50px;transform:scaleX(0.8600);transform-origin:100% 50%;">0</span><span class="t" style="font-size:11.2px;color:#f01818;top:226.10px;right:22.40px;transform:scaleX(0.8600);transform-origin:100% 50%;">0</span><span class="t" style="font-size:11.2px;color:#333;top:242.77px;left:315.60px;transform:scaleX(0.8767);transform-origin:0 50%;">00.06a</span><span class="t" style="font-size:11.2px;color:#333;top:242.77px;left:429.00px;transform:scaleX(0.8398);transform-origin:0 50%;">Mens room</span><span class="t" style="font-size:11.2px;color:#333;top:242.77px;right:922.50px;transform:scaleX(0.8600);transform-origin:100% 50%;">0</span><span class="t" style="font-size:11.2px;color:#333;top:242.77px;right:697.50px;transform:scaleX(0.8600);transform-origin:100% 50%;">0</span><span class="t" style="font-size:11.2px;color:#333;top:242.77px;right:472.50px;transform:scaleX(0.8600);transform-origin:100% 50%;">2</span><span class="t" style="font-size:11.2px;color:#333;top:242.77px;right:247.50px;transform:scaleX(0.8600);transform-origin:100% 50%;">2</span><span class="t" style="font-size:11.2px;color:#f01818;top:242.77px;right:22.40px;transform:scaleX(0.8600);transform-origin:100% 50%;">0</span><span class="t" style="font-size:11.2px;color:#333;top:259.44px;left:315.60px;transform:scaleX(0.7870);transform-origin:0 50%;">01</span><span class="t" style="font-size:11.2px;color:#333;top:259.44px;left:417.20px;transform:scaleX(0.8609);transform-origin:0 50%;">2F - UFL</span><span class="t" style="font-size:11.2px;color:#333;top:259.44px;right:922.50px;transform:scaleX(0.8600);transform-origin:100% 50%;">0</span><span class="t" style="font-size:11.2px;color:#333;top:259.44px;right:697.50px;transform:scaleX(0.8600);transform-origin:100% 50%;">0</span><span class="t" style="font-size:11.2px;color:#333;top:259.44px;right:472.50px;transform:scaleX(0.8597);transform-origin:100% 50%;">&lt;* varying*&gt;</span><span class="t" style="font-size:11.2px;color:#333;top:259.44px;right:247.50px;transform:scaleX(0.8597);transform-origin:100% 50%;">&lt;* varying*&gt;</span><span class="t" style="font-size:11.2px;color:#333;top:259.44px;right:22.40px;transform:scaleX(0.8600);transform-origin:100% 50%;">0</span><span class="t" style="font-size:11.2px;color:#333;top:276.10px;left:315.60px;transform:scaleX(0.8767);transform-origin:0 50%;">01.06a</span><span class="t" style="font-size:11.2px;color:#333;top:276.10px;left:429.00px;transform:scaleX(0.8445);transform-origin:0 50%;">Ladies room</span><span class="t" style="font-size:11.2px;color:#333;top:276.10px;right:922.50px;transform:scaleX(0.8600);transform-origin:100% 50%;">0</span><span class="t" style="font-size:11.2px;color:#333;top:276.10px;right:697.50px;transform:scaleX(0.8600);transform-origin:100% 50%;">0</span><span class="t" style="font-size:11.2px;color:#333;top:276.10px;right:472.50px;transform:scaleX(0.8600);transform-origin:100% 50%;">4</span><span class="t" style="font-size:11.2px;color:#333;top:276.10px;right:247.50px;transform:scaleX(0.8600);transform-origin:100% 50%;">0</span><span class="t" style="font-size:11.2px;color:#f01818;top:276.10px;right:22.40px;transform:scaleX(0.8600);transform-origin:100% 50%;">0</span><span class="t" style="font-size:11.2px;color:#333;top:292.77px;left:315.60px;transform:scaleX(0.8767);transform-origin:0 50%;">01.07a</span><span class="t" style="font-size:11.2px;color:#333;top:292.77px;left:429.00px;transform:scaleX(0.8398);transform-origin:0 50%;">Mens room</span><span class="t" style="font-size:11.2px;color:#333;top:292.77px;right:922.50px;transform:scaleX(0.8600);transform-origin:100% 50%;">0</span><span class="t" style="font-size:11.2px;color:#333;top:292.77px;right:697.50px;transform:scaleX(0.8600);transform-origin:100% 50%;">0</span><span class="t" style="font-size:11.2px;color:#333;top:292.77px;right:472.50px;transform:scaleX(0.8600);transform-origin:100% 50%;">2</span><span class="t" style="font-size:11.2px;color:#333;top:292.77px;right:247.50px;transform:scaleX(0.8600);transform-origin:100% 50%;">2</span><span class="t" style="font-size:11.2px;color:#f01818;top:292.77px;right:22.40px;transform:scaleX(0.8600);transform-origin:100% 50%;">0</span><span class="t" style="font-size:11.2px;color:#333;top:309.44px;left:315.60px;transform:scaleX(0.7870);transform-origin:0 50%;">02</span><span class="t" style="font-size:11.2px;color:#333;top:309.44px;left:417.20px;transform:scaleX(0.8609);transform-origin:0 50%;">3F - UFL</span><span class="t" style="font-size:11.2px;color:#333;top:309.44px;right:922.50px;transform:scaleX(0.8600);transform-origin:100% 50%;">0</span><span class="t" style="font-size:11.2px;color:#333;top:309.44px;right:697.50px;transform:scaleX(0.8600);transform-origin:100% 50%;">0</span><span class="t" style="font-size:11.2px;color:#333;top:309.44px;right:472.50px;transform:scaleX(0.8597);transform-origin:100% 50%;">&lt;* varying*&gt;</span><span class="t" style="font-size:11.2px;color:#333;top:309.44px;right:247.50px;transform:scaleX(0.8597);transform-origin:100% 50%;">&lt;* varying*&gt;</span><span class="t" style="font-size:11.2px;color:#333;top:309.44px;right:22.40px;transform:scaleX(0.8600);transform-origin:100% 50%;">0</span><span class="t" style="font-size:11.2px;color:#333;top:326.10px;left:315.60px;transform:scaleX(0.8767);transform-origin:0 50%;">02.06a</span><span class="t" style="font-size:11.2px;color:#333;top:326.10px;left:429.00px;transform:scaleX(0.8445);transform-origin:0 50%;">Ladies room</span><span class="t" style="font-size:11.2px;color:#333;top:326.10px;right:922.50px;transform:scaleX(0.8600);transform-origin:100% 50%;">0</span><span class="t" style="font-size:11.2px;color:#333;top:326.10px;right:697.50px;transform:scaleX(0.8600);transform-origin:100% 50%;">0</span><span class="t" style="font-size:11.2px;color:#333;top:326.10px;right:472.50px;transform:scaleX(0.8600);transform-origin:100% 50%;">4</span><span class="t" style="font-size:11.2px;color:#333;top:326.10px;right:247.50px;transform:scaleX(0.8600);transform-origin:100% 50%;">0</span><span class="t" style="font-size:11.2px;color:#f01818;top:326.10px;right:22.40px;transform:scaleX(0.8600);transform-origin:100% 50%;">0</span><span class="t" style="font-size:11.2px;color:#333;top:342.77px;left:315.60px;transform:scaleX(0.8767);transform-origin:0 50%;">02.07a</span><span class="t" style="font-size:11.2px;color:#333;top:342.77px;left:429.00px;transform:scaleX(0.8398);transform-origin:0 50%;">Mens room</span><span class="t" style="font-size:11.2px;color:#333;top:342.77px;right:922.50px;transform:scaleX(0.8600);transform-origin:100% 50%;">0</span><span class="t" style="font-size:11.2px;color:#333;top:342.77px;right:697.50px;transform:scaleX(0.8600);transform-origin:100% 50%;">0</span><span class="t" style="font-size:11.2px;color:#333;top:342.77px;right:472.50px;transform:scaleX(0.8600);transform-origin:100% 50%;">2</span><span class="t" style="font-size:11.2px;color:#333;top:342.77px;right:247.50px;transform:scaleX(0.8600);transform-origin:100% 50%;">2</span><span class="t" style="font-size:11.2px;color:#f01818;top:342.77px;right:22.40px;transform:scaleX(0.8600);transform-origin:100% 50%;">0</span><div style="left:265.00px;top:882.00px;width:1513.00px;height:1.00px;background:#dedede;"></div><div style="left:265.10px;top:859.30px;width:146.00px;height:23.20px;background:#d9d9d9;"></div><div style="left:267.80px;top:862.00px;width:51.80px;height:21.40px;background:#fff;"></div><div style="left:366.40px;top:859.30px;width:1.60px;height:23.20px;background:#eaeaea;"></div><span class="t" style="font-size:10.9px;color:#333;top:864.00px;left:275.40px;transform:scaleX(0.9135);transform-origin:0 50%;">Log</span><svg style="left:301.40px;top:864.60px" width="14.2" height="14.6" viewBox="0 0 14.2 14.6" preserveAspectRatio="none"><path d="M0.7,0.7 H13.5 L8.4,6.8 V14 L5.8,12 V6.8 Z" fill="#fff" stroke="#444" stroke-width="1.1"/></svg><span class="t" style="font-size:10.9px;color:#333;top:864.00px;left:326.60px;transform:scaleX(0.9166);transform-origin:0 50%;">Results</span><span class="t" style="font-size:10.9px;color:#333;top:864.00px;left:374.50px;transform:scaleX(0.9489);transform-origin:0 50%;">Notes</span><div style="left:265.00px;top:915.30px;width:1497.60px;height:16.40px;background:#d8d8d8;"></div><span class="t" style="font-size:11.8px;color:#333;top:884.00px;left:267.10px;transform:scaleX(1.0234);transform-origin:0 50%;">NOTE (Heat Load, Load Calculation) in Unbenannt: The room heat loads are only partly activated!</span><span class="t" style="font-size:11.8px;color:#333;top:899.74px;left:267.10px;transform:scaleX(1.0082);transform-origin:0 50%;">ERROR (Room Data Sheet, Parameterization) in Project (Office-Bsp-TGA): There are still errors in Property Set Structural Data</span><span class="t" style="font-size:11.8px;color:#333;top:915.48px;left:267.10px;transform:scaleX(1.0065);transform-origin:0 50%;">ERROR (Room Data Sheet, Parameterization) in Project (Office-Bsp-TGA): There are still errors in Property Set Sanitary Data</span><span class="t" style="font-size:11.8px;color:#333;top:931.22px;left:267.10px;transform:scaleX(1.0059);transform-origin:0 50%;">ERROR (Room Data Sheet, Parameterization) in Project (Office-Bsp-TGA): There are still errors in Property Set Electrical Data</span><span class="t" style="font-size:11.8px;color:#333;top:946.96px;left:267.10px;transform:scaleX(1.0106);transform-origin:0 50%;">ERROR (Room Data Sheet, Parameterization) in Project (Office-Bsp-TGA): There are still errors in Property Set BU - Cooling Load</span><span class="t" style="font-size:11.8px;color:#333;top:962.70px;left:267.10px;transform:scaleX(1.0214);transform-origin:0 50%;">check finished, 5 errors and 10 warnings.</span><div style="left:1763.00px;top:883.00px;width:15.00px;height:99.40px;background:#f0f0f0;"></div><div style="left:1761.60px;top:982.40px;width:16.40px;height:15.20px;background:#f6f6f6;"></div><div style="left:1763.00px;top:951.00px;width:13.80px;height:15.70px;background:#cdcdcd;"></div><svg style="left:1766.00px;top:889.40px" width="8" height="5" viewBox="0 0 8 5" preserveAspectRatio="none"><path d="M0.6,4.4 L4,1 L7.4,4.4" fill="none" stroke="#444" stroke-width="1.5"/></svg><svg style="left:1766.00px;top:972.20px" width="8" height="5" viewBox="0 0 8 5" preserveAspectRatio="none"><path d="M0.6,0.6 L4,4 L7.4,0.6" fill="none" stroke="#444" stroke-width="1.5"/></svg></body></html>
